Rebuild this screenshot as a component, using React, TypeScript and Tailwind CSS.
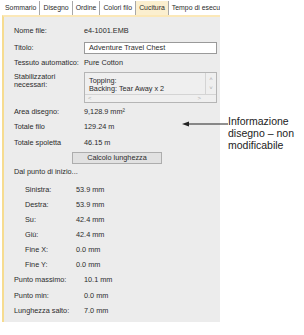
import React from "react";

const tabs = ["Sommario", "Disegno", "Ordine", "Colori filo", "Cucitura", "Tempo di esecuzione"];

const Row = ({ label, value, indent = false, h = "h-[14px]" }: { label: string; value: string; indent?: boolean; h?: string }) => (
  <div className={`flex items-center ${h}`}>
    <div className={indent ? "w-[62px] pl-[11px] shrink-0" : "w-[70px] shrink-0"}>{label}</div>
    <div>{value}</div>
  </div>
);

export default function App() {
  return (
    <div
      className="relative w-[304px] h-[335px] bg-white overflow-hidden text-[#2b2b2b]"
      style={{ fontFamily: '"Liberation Sans", Arial, sans-serif' }}
    >
      <div className="ml-[2px] w-[218px] pt-[1px]">
        {/* Tabs */}
        <div className="flex h-[14px] text-[6.9px] overflow-hidden whitespace-nowrap">
          {tabs.map((t) => (
            <div
              key={t}
              className={`flex items-center px-[3px] border-r border-[#a8a8a8] ${
                t === "Cucitura" ? "bg-[#fbefcf]" : ""
              }`}
            >
              {t}
            </div>
          ))}
        </div>

        {/* Panel */}
        <div className="h-[307px] bg-[#ececec] border-t-[2px] border-[#fbe8b8] border-l-[2px] border-l-[#f6dc90] pl-[10px] text-[7.3px]">
          <div className="pt-[7px]">
            <Row label="Nome file:" value="e4-1001.EMB" />
            <div className="flex items-center h-[12px] mt-[4px]">
              <div className="w-[70px] shrink-0">Titolo:</div>
              <div className="w-[133px] h-[12px] bg-white border border-[#9a9a9a] flex items-center pl-[4px]">
                Adventure Travel Chest
              </div>
            </div>
            <div className="mt-[2px]">
              <Row label="Tessuto automatico:" value="Pure Cotton" />
            </div>
            <div className="flex mt-[2px] h-[31px]">
              <div className="w-[70px] shrink-0 leading-[8px] pt-[1px]">
                Stabilizzatori
                <br />
                necessari:
              </div>
              <div className="w-[133px] h-[31px] border border-[#b5b5b5] bg-[#efefef] flex flex-col">
                <div className="flex flex-1">
                  <div className="flex-1 pl-[4px] pt-[4px] leading-[7.5px]">
                    Topping:
                    <br />
                    Backing: Tear Away x 2
                  </div>
                  <div className="w-[11px] border-l border-[#d4d4d4] flex flex-col items-center justify-center text-[6px] text-[#a8a8a8] leading-[9px]">
                    <span>˄</span>
                    <span>˅</span>
                  </div>
                </div>
                <div className="h-[8px] border-t border-[#d4d4d4] flex items-center justify-between px-[3px] pr-[15px] text-[6px] text-[#b0b0b0]">
                  <span>&lt;</span>
                  <span>&gt;</span>
                </div>
              </div>
            </div>
            <div className="mt-[2px]">
              <Row label="Area disegno:" value="9,128.9 mm²" />
            </div>
            <div className="mt-[1px]">
              <Row label="Totale filo" value="129.24 m" />
            </div>
            <div className="mt-[2px]">
              <Row label="Totale spoletta" value="46.15 m" />
            </div>
            <div className="mt-[2px] pl-[58px]">
              <div className="w-[90px] h-[12px] bg-[#e1e1e1] border border-[#adadad] flex items-center justify-center">
                Calcolo lunghezza
              </div>
            </div>
            <div className="h-[12px] mt-[2px] flex items-center">Dal punto di inizio...</div>
            <div className="mt-[5px]">
              <Row indent h="h-[15px]" label="Sinistra:" value="53.9 mm" />
              <Row indent h="h-[15px]" label="Destra:" value="53.9 mm" />
              <Row indent h="h-[15px]" label="Su:" value="42.4 mm" />
              <Row indent h="h-[15px]" label="Giù:" value="42.4 mm" />
              <Row indent h="h-[15px]" label="Fine X:" value="0.0 mm" />
              <Row indent h="h-[15px]" label="Fine Y:" value="0.0 mm" />
              <Row h="h-[15.5px]" label="Punto massimo:" value="10.1 mm" />
              <Row h="h-[15.5px]" label="Punto min:" value="0.0 mm" />
              <Row h="h-[15.5px]" label="Lunghezza salto:" value="7.0 mm" />
            </div>
          </div>
        </div>
      </div>

      {/* Callout */}
      <svg className="absolute left-[182px] top-[120px]" width="47" height="8" viewBox="0 0 47 8">
        <line x1="4" y1="4" x2="46" y2="4" stroke="#222" strokeWidth="1" />
        <polygon points="0,4 7,1.5 7,6.5" fill="#222" />
      </svg>
      <div className="absolute left-[228px] top-[115px] text-[10.5px] leading-[12px] text-[#222]">
        Informazione
        <br />
        disegno – non
        <br />
        modificabile
      </div>
    </div>
  );
}
